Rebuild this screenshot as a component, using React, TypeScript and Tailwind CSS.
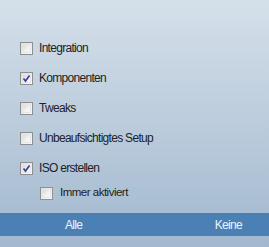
import React from 'react';

type Item = { label: string; checked: boolean };

const items: Item[] = [
  { label: 'Integration', checked: false },
  { label: 'Komponenten', checked: true },
  { label: 'Tweaks', checked: false },
  { label: 'Unbeaufsichtigtes Setup', checked: false },
  { label: 'ISO erstellen', checked: true },
];

function Box({ checked }: { checked: boolean }) {
  return (
    <span className="relative flex h-[13px] w-[13px] shrink-0 items-center justify-center border border-[#8e8f8f] bg-gradient-to-br from-[#dcdcdc] to-[#fbfbfb]">
      <span className="absolute inset-[1px] border border-[#e6e6e6] bg-gradient-to-br from-[#d8d8d8] via-[#efefef] to-[#fafafa]" />
      {checked && (
        <svg viewBox="0 0 11 11" className="relative h-[11px] w-[11px]">
          <path d="M2.5 5.5 L4.5 8 L8.5 2.5" fill="none" stroke="#3a3f98" strokeWidth="1.7" />
        </svg>
      )}
    </span>
  );
}

export default function App() {
  return (
    <div
      className="flex h-[247px] w-[269px] flex-col bg-gradient-to-b from-[#d5e0ea] to-[#a2b8cf] text-[#222]"
      style={{ fontFamily: '"Liberation Sans", Arial, sans-serif' }}
    >
      <div className="flex flex-col pt-[33px]">
        {items.map(it => (
          <div key={it.label} className="flex h-[30px] items-center gap-[6px] pl-[20px] text-[12px] tracking-[-0.7px]">
            <Box checked={it.checked} />
            <span>{it.label}</span>
          </div>
        ))}
        <div className="flex h-[20px] items-center gap-[7px] pl-[40px] text-[11.5px] tracking-[-0.5px]">
          <Box checked={false} />
          <span>Immer aktiviert</span>
        </div>
      </div>
      <div className="mt-[10px] flex h-[23px] items-center bg-[#4a80b4] text-[12px] tracking-[-0.7px] text-[#eef4fa]">
        <span className="ml-[65px]">Alle</span>
        <span className="ml-auto mr-[27px]">Keine</span>
      </div>
    </div>
  );
}
